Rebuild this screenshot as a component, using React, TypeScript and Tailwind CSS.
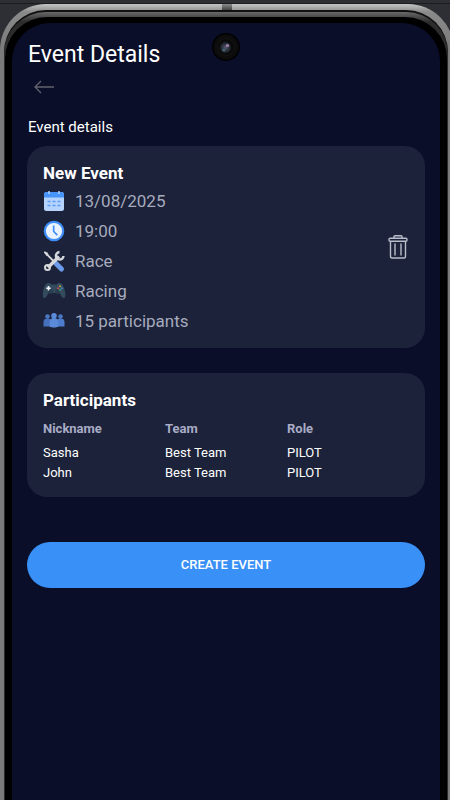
import type { ReactNode } from 'react'

interface Participant {
    id: number
    nickname: string
    team: string
    role: string
}

interface Detail {
    label: string
    icon: ReactNode
}

const participants: Participant[] = [
    { id: 1, nickname: 'Sasha', team: 'Best Team', role: 'PILOT' },
    { id: 2, nickname: 'John', team: 'Best Team', role: 'PILOT' },
]

function CalendarIcon() {
    return (
        <svg viewBox="1 0 24 24" className="h-6 w-6" aria-hidden="true">
            <rect x="2" y="3" width="20" height="19" rx="2.5" fill="#b5d3fd" />
            <path d="M2 8.500V5.500A2.500 2.500 0 0 1 4.500 3h15A2.500 2.500 0 0 1 22 5.500v3z" fill="#4794fa" />
            <path d="M7 2v3M17 2v3" stroke="#b5d3fd" strokeWidth="1.500" />
            <path d="M5.500 12.500h13M5.500 16.500h13" stroke="#5b9cf5" strokeWidth="1.600" strokeDasharray="3 2" />
        </svg>
    )
}

function ClockIcon() {
    return (
        <svg viewBox="1 0 24 24" className="h-6 w-6" aria-hidden="true">
            <circle cx="12" cy="12" r="9.200" fill="#eaf2ff" stroke="#3f8ef7" strokeWidth="2.200" />
            <path d="M11.700 6.500v6l3.600 3.600" fill="none" stroke="#3f8ef7" strokeWidth="1.700" />
        </svg>
    )
}

function ToolsIcon() {
    return (
        <svg viewBox="1 0 24 24" className="h-6 w-6" aria-hidden="true">
            <path d="M3 3.500l10 10" stroke="#d6d8dc" strokeWidth="1.800" strokeLinecap="round" />
            <path d="M2 2.500l3.500 1 1 2.500-2 1z" fill="#d6d8dc" />
            <path d="M14 14.500l5.500 5.500" stroke="#6b9bea" strokeWidth="5" strokeLinecap="round" />
            <path d="M6 18.500L17 7.500" stroke="#d6d8dc" strokeWidth="3.400" />
            <circle cx="5.500" cy="18.500" r="2.500" fill="none" stroke="#d6d8dc" strokeWidth="2" />
            <path d="M17.500 3A3.800 3.800 0 1 0 21.500 7" fill="none" stroke="#d6d8dc" strokeWidth="2.400" />
        </svg>
    )
}

function GamepadIcon() {
    return (
        <svg viewBox="1 0 24 24" className="h-6 w-6" aria-hidden="true">
            <path
                d="M5 4.500C6.500 3.600 8.500 4 9.500 5.500h5C15.500 4 17.500 3.600 19 4.500c2.500.7 4.700 9 4.400 12-.3 3.400-3 3.200-4.200.6L17.500 14h-11l-1.700 3.100C3.600 19.700.9 19.900.6 16.500.3 13.500 2.500 5.200 5 4.500z"
                fill="#344b5e"
            />
            <circle cx="8.500" cy="12.700" r="2.400" fill="#283c4d" />
            <circle cx="15.500" cy="12.700" r="2.400" fill="#283c4d" />
            <path d="M6.500 7v4.400M4.300 9.200h4.400" stroke="#f1f4f6" strokeWidth="1.600" />
            <circle cx="18" cy="7.300" r="1" fill="#c9a13b" />
            <circle cx="16.200" cy="9.200" r="1" fill="#c8504b" />
            <circle cx="19.800" cy="9.200" r="1" fill="#4684c2" />
            <circle cx="18" cy="11" r="1" fill="#3b9b71" />
        </svg>
    )
}

function PeopleIcon() {
    return (
        <svg viewBox="1 0 24 24" className="h-6 w-6" aria-hidden="true">
            <circle cx="5.500" cy="7.500" r="2.300" fill="#4b78c2" />
            <circle cx="18.500" cy="7.500" r="2.300" fill="#4b78c2" />
            <path d="M1.500 17.500v-4.500c0-2.500 1.500-3.500 4-3.500s4 1 4 3.500v4.500z" fill="#4570bd" />
            <path d="M14.500 17.500v-4.500c0-2.500 1.500-3.500 4-3.500s4 1 4 3.500v4.500z" fill="#4d7dcc" />
            <circle cx="12" cy="6.800" r="2.800" fill="#5b8bd8" />
            <path d="M7.700 17.700v-5c0-2.500 1.600-3.800 4.300-3.800s4.300 1.300 4.300 3.800v5c-2 1-6.600 1-8.600 0z" fill="#5b8bd8" />
        </svg>
    )
}

function TrashIcon() {
    return (
        <svg viewBox="0 0 20 24" className="h-6 w-5" fill="none" stroke="#b9bdca" strokeWidth="1.400" aria-hidden="true">
            <path d="M6 3V1.800c0-.6.4-1 1-1h6c.6 0 1 .4 1 1V3" />
            <rect x="1" y="3.200" width="18" height="3" rx="1.200" />
            <path d="M2.500 6.500v14.700c0 1 .8 1.800 1.800 1.800h11.400c1 0 1.800-.8 1.800-1.800V6.500" />
            <path d="M7 9v11M13 9v11" strokeLinecap="round" />
        </svg>
    )
}

const details: Detail[] = [
    { label: '13/08/2025', icon: <CalendarIcon /> },
    { label: '19:00', icon: <ClockIcon /> },
    { label: 'Race', icon: <ToolsIcon /> },
    { label: 'Racing', icon: <GamepadIcon /> },
    { label: '15 participants', icon: <PeopleIcon /> },
]

function Camera() {
    return (
        <svg viewBox="0 0 28 28" className="absolute left-1/2 top-[10px] h-7 w-7 -translate-x-1/2" aria-hidden="true">
            <defs>
                <radialGradient id="lens">
                    <stop offset="0" stopColor="#5d5370" />
                    <stop offset="0.500" stopColor="#2f3945" />
                    <stop offset="1" stopColor="#101014" />
                </radialGradient>
            </defs>
            <circle cx="14" cy="14" r="14" fill="#020204" />
            <circle cx="14" cy="14" r="12.500" fill="#0c0c0d" />
            <circle cx="14" cy="14" r="8.500" fill="#09090a" stroke="#151516" />
            <circle cx="13.500" cy="14.500" r="6" fill="url(#lens)" />
            <circle cx="15.500" cy="12.500" r="1.600" fill="#a283b0" />
            <circle cx="11.800" cy="17" r="1.500" fill="#446372" />
        </svg>
    )
}

function PhoneFrame({ children }: { children: ReactNode }) {
    return (
        <div className="flex min-h-screen flex-col overflow-hidden bg-[#2e2f34]">
            <div className="h-1 border-b border-[#1c1c1f]" />
            <div className="relative -mr-1 flex flex-1 flex-col rounded-t-[46px] bg-linear-to-b from-[#c4c4c4] via-[#8a8a8a] via-[8px] to-[#7a7a7a] to-[48px] pl-1 pr-[6px] pt-[6px]">
                {/* antenna line */}
                <div className="absolute left-1/2 top-0 h-[6px] w-[10px] -translate-x-1/2 bg-linear-to-b from-[#8c8c8c] to-[#444444]" />
                <div className="flex flex-1 flex-col rounded-t-[42px] bg-[#111111] pt-[2px]">
                    <div className="flex flex-1 flex-col rounded-t-[42px] bg-linear-to-b from-[#6a6a6a] to-[#2c2c2c] to-[10px] px-px pt-[5px]">
                        <div className="flex flex-1 flex-col rounded-t-[42px] bg-black px-[7px] pt-[6px]">
                            <div className="relative flex-1 rounded-t-[38px] bg-[#0b0e28]">
                                <Camera />
                                {children}
                            </div>
                        </div>
                    </div>
                </div>
            </div>
        </div>
    )
}

export default function App() {
    return (
        <PhoneFrame>
            <main className="px-[15px] pt-4 font-['Roboto',sans-serif] text-white">
                <div className="px-px">
                    <h1 className="text-[23px] leading-8">Event Details</h1>
                    <button type="button" aria-label="Back" className="ml-1 mt-1 flex h-6 w-6 items-center justify-center">
                        <svg viewBox="0 0 20 14" className="h-[14px] w-5" fill="none" stroke="#62636e" strokeWidth="1.300" aria-hidden="true">
                            <path d="M7 1L1 7l6 6M1 7h19" />
                        </svg>
                    </button>
                    <h2 className="mt-4 text-[15px] leading-6">Event details</h2>
                </div>

                <section className="mt-[7px] flex items-center justify-between rounded-[20px] bg-[#1b2239] px-4 py-[15px]">
                    <div>
                        <h3 className="text-[17px] font-bold leading-6">New Event</h3>
                        <ul className="mt-1 space-y-[6px]">
                            {details.map(detail => (
                                <li key={detail.label} className="flex items-center gap-2 text-[17px] leading-6 text-[#a7abbe]">
                                    {detail.icon}
                                    {detail.label}
                                </li>
                            ))}
                        </ul>
                    </div>
                    <button type="button" aria-label="Delete event" className="flex w-[22px] justify-center">
                        <TrashIcon />
                    </button>
                </section>

                <section className="mt-[25px] rounded-[20px] bg-[#1b2239] px-4 pb-[14px] pt-[15px]">
                    <h3 id="participants" className="text-[17px] font-bold leading-6">Participants</h3>
                    <table aria-labelledby="participants" className="mt-[7px] w-full table-fixed text-left text-[13px] leading-5">
                        <thead>
                            <tr className="text-[#a9acc6]">
                                <th className="pb-1 font-bold">Nickname</th>
                                <th className="pb-1 font-bold">Team</th>
                                <th className="pb-1 font-bold">Role</th>
                            </tr>
                        </thead>
                        <tbody>
                            {participants.map(p => (
                                <tr key={p.id}>
                                    <td>{p.nickname}</td>
                                    <td>{p.team}</td>
                                    <td>{p.role}</td>
                                </tr>
                            ))}
                        </tbody>
                    </table>
                </section>

                <button type="button" className="mt-[45px] h-[46px] w-full rounded-full bg-[#3990f6] text-[13px] font-medium">
                    CREATE EVENT
                </button>
            </main>
        </PhoneFrame>
    )
}
